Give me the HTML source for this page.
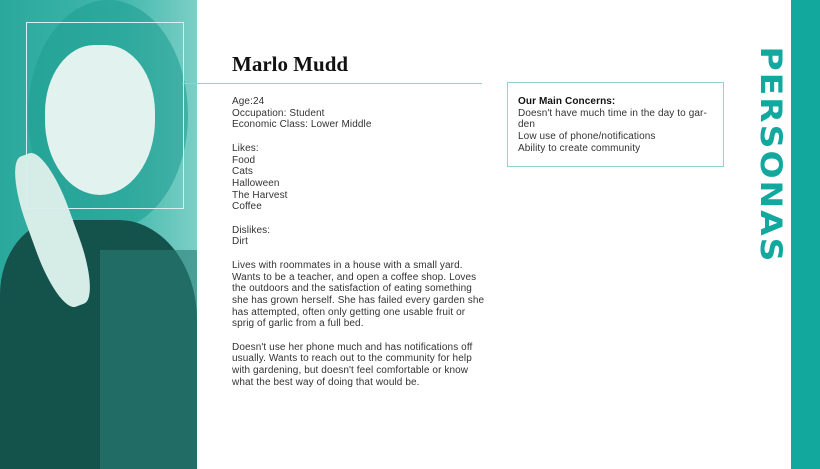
<!DOCTYPE html><html><head><style>
body{margin:0;width:820px;height:469px;background:#fff;position:relative;overflow:hidden;font-family:"Liberation Sans",sans-serif;}
.photo{position:absolute;left:0;top:0;width:197px;height:469px;background:linear-gradient(90deg,#2aa89c,#41b7ab 60%,#7ccfc6);overflow:hidden}
.t{position:absolute;left:232px;font-size:10px;line-height:11.7px;color:#333;letter-spacing:0.1px}
</style></head><body>
<div class="photo">
<div style="position:absolute;left:28px;top:0;width:160px;height:230px;border-radius:50%;background:#1f9f93;opacity:.6"></div>
<div style="position:absolute;left:45px;top:45px;width:110px;height:150px;border-radius:45% 45% 50% 50%;background:#e2f2ee"></div>
<div style="position:absolute;left:0;top:220px;width:197px;height:249px;background:#14524c;border-radius:30% 40% 0 0"></div>
<div style="position:absolute;left:30px;top:150px;width:45px;height:160px;border-radius:40%;background:#d5ece7;transform:rotate(-20deg)"></div>
<div style="position:absolute;left:100px;top:250px;width:97px;height:219px;background:#2a7f76;opacity:.6"></div>
<div style="position:absolute;left:26px;top:22px;width:156px;height:185px;border:1px solid #d8f0ec"></div>
</div>
<div style="position:absolute;left:182px;top:83px;width:300px;height:1px;background:#8fd3cc"></div>
<div style="position:absolute;left:232px;top:52px;font:bold 21px 'Liberation Serif',serif;color:#111">Marlo Mudd</div>
<div class="t" style="top:96px">Age:24<br>Occupation: Student<br>Economic Class: Lower Middle<br><br>Likes:<br>Food<br>Cats<br>Halloween<br>The Harvest<br>Coffee<br><br>Dislikes:<br>Dirt<br><br>Lives with roommates in a house with a small yard.<br>Wants to be a teacher, and open a coffee shop. Loves<br>the outdoors and the satisfaction of eating something<br>she has grown herself. She has failed every garden she<br>has attempted, often only getting one usable fruit or<br>sprig of garlic from a full bed.<br><br>Doesn't use her phone much and has notifications off<br>usually. Wants to reach out to the community for help<br>with gardening, but doesn't feel comfortable or know<br>what the best way of doing that would be.</div>
<div style="position:absolute;left:507px;top:82px;width:215px;height:83px;border:1px solid #8fd3cc"></div>
<div class="t" style="left:518px;top:96px"><b style="color:#111">Our Main Concerns:</b><br>Doesn't have much time in the day to gar-<br>den<br>Low use of phone/notifications<br>Ability to create community</div>
<div style="position:absolute;left:791px;top:0;width:29px;height:469px;background:#13a89e"></div>
<div style="position:absolute;left:771px;top:155px;width:0;height:0"><div style="position:absolute;left:-110px;top:-15px;width:220px;text-align:center;transform:rotate(90deg) scaleY(0.9);font:bold 33px 'DejaVu Sans',sans-serif;color:#13a89e;letter-spacing:2px;line-height:30px;transform-origin:center">PERSONAS</div></div>
</body></html>
